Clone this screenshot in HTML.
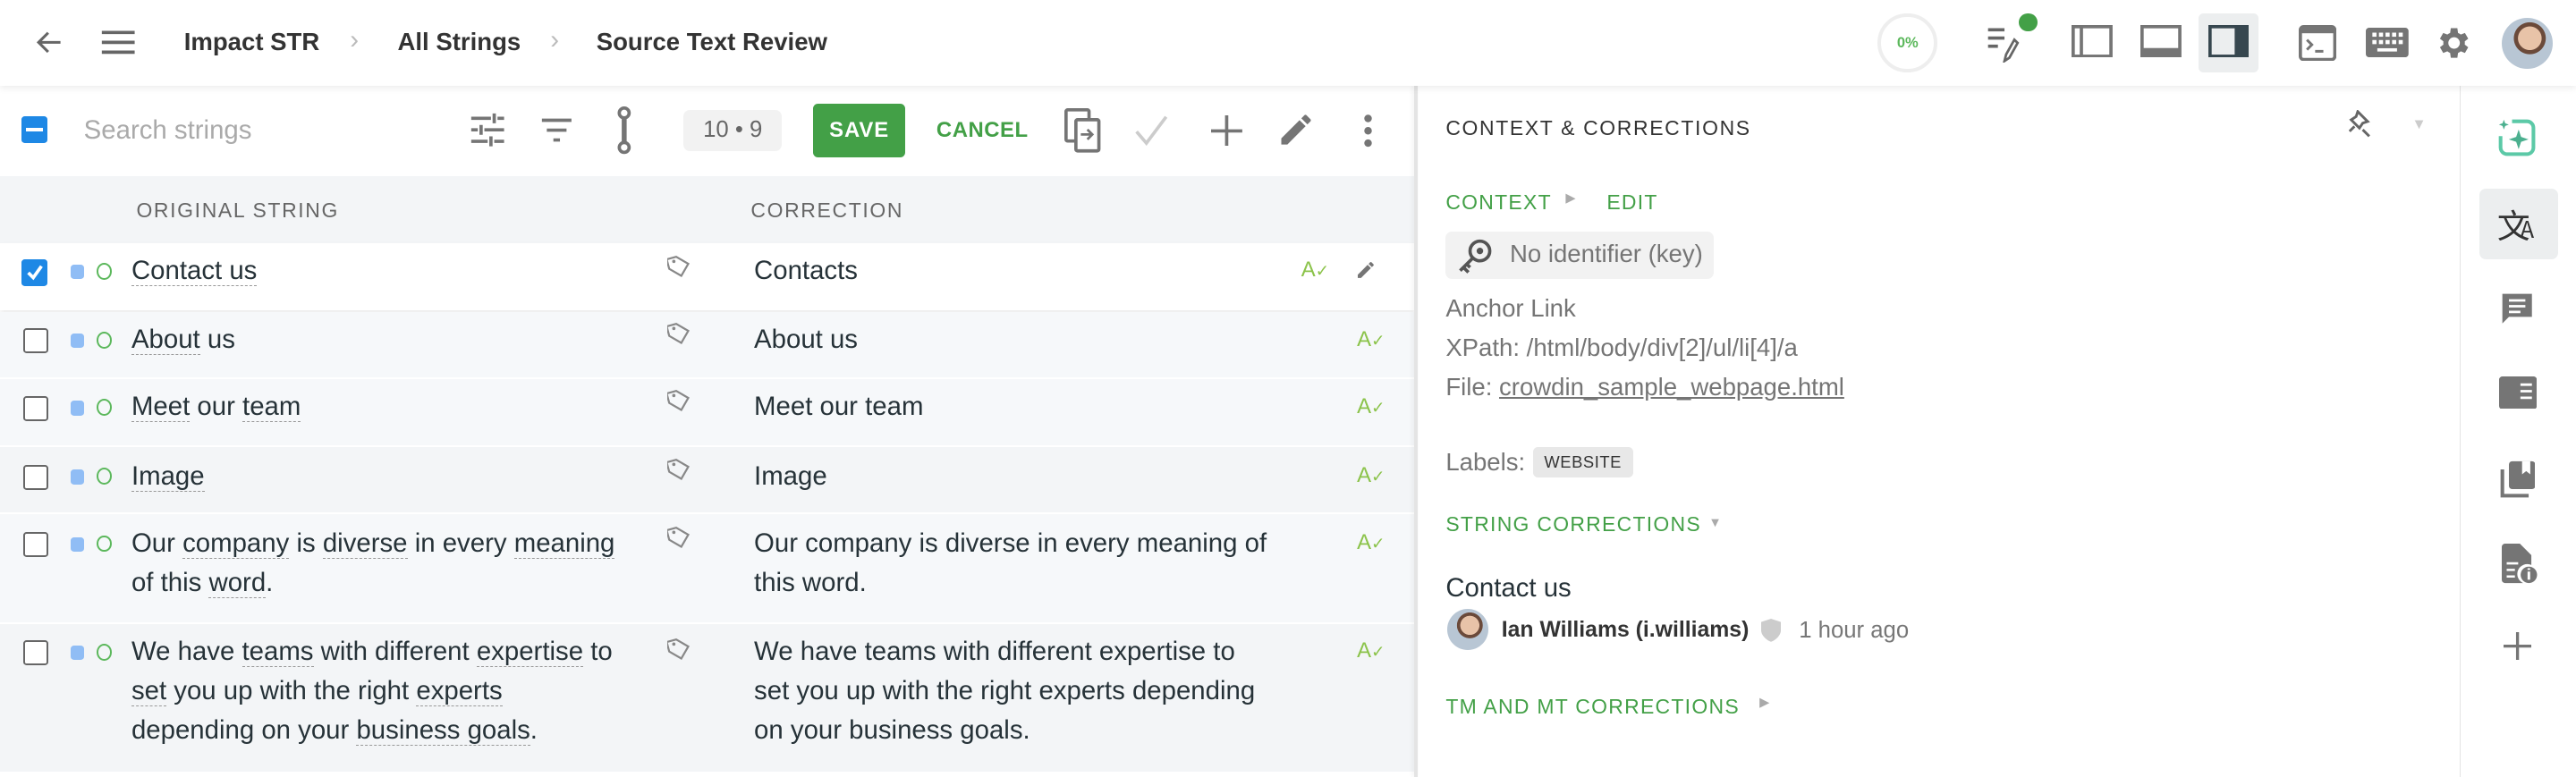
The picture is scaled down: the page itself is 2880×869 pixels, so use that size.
<!DOCTYPE html>
<html><head><meta charset="utf-8">
<style>
html,body{margin:0;padding:0;}
body{width:1568px;height:472.6px;overflow:hidden;zoom:1.83673;background:#fff;font-family:"Liberation Sans",sans-serif;color:#263238;position:relative;}
.a{position:absolute;}
svg{position:absolute;}
.top{left:0;top:0;width:1568px;height:52px;background:#fff;box-shadow:0 2px 4px rgba(0,0,0,.07);z-index:3;}
.bc{font-size:15px;font-weight:bold;color:#333;top:17px;}
.chev{color:#bbb;font-size:16px;top:15px;}
.row{left:0;width:861px;}
.t{font-size:16px;color:#263238;line-height:24px;}
.u{border-bottom:1px dashed #999;}
.cb{left:14px;width:13px;height:13px;border:1.5px solid #666;border-radius:2px;background:#fff;}
.sq{left:43px;width:8px;height:9px;background:#90bdf5;border-radius:2px;}
.ci{left:59px;width:7px;height:8px;border:1.3px solid #5cb85c;border-radius:50%;}
.hdr{font-size:12.5px;letter-spacing:.9px;color:#666;}
.gt{font-size:12.5px;letter-spacing:.7px;color:#43a047;}
.rt{font-size:15px;color:#757575;}
</style></head><body>

<div class="a top">
  <svg style="left:20px;top:16px" width="20" height="20" viewBox="0 0 24 24"><path d="M20 12H5M11 5l-7 7 7 7" stroke="#666" stroke-width="2" fill="none"/></svg>
  <svg style="left:61px;top:16px" width="22" height="20" viewBox="0 0 22 20"><path d="M1 4h20M1 10h20M1 16h20" stroke="#666" stroke-width="2"/></svg>
  <div class="a bc" style="left:112px">Impact STR</div>
  <div class="a chev" style="left:213px">›</div>
  <div class="a bc" style="left:242px">All Strings</div>
  <div class="a chev" style="left:335px">›</div>
  <div class="a bc" style="left:363px">Source Text Review</div>

  <div class="a" style="left:1143px;top:8px;width:32px;height:32px;border:2.5px solid #eee;border-radius:50%;font-size:9px;font-weight:bold;color:#5cb85c;text-align:center;line-height:32px;">0%</div>
  <svg style="left:1208px;top:14px" width="26" height="24" viewBox="0 0 26 24"><path d="M2 4h10M2 9h10M2 14h6" stroke="#666" stroke-width="2"/><path d="M18 10l-5 9-1 4 3-2 5-9z" stroke="#666" stroke-width="1.5" fill="none"/></svg>
  <div class="a" style="left:1229px;top:8px;width:11px;height:11px;border-radius:50%;background:#43a047"></div>
  <svg style="left:1261px;top:15px" width="25" height="20" viewBox="0 0 25 20"><rect x="1" y="1" width="23" height="18" stroke="#757575" stroke-width="2" fill="none"/><path d="M6 1v18" stroke="#757575" stroke-width="2"/></svg>
  <svg style="left:1303px;top:15px" width="25" height="20" viewBox="0 0 25 20"><rect x="1" y="1" width="23" height="18" stroke="#757575" stroke-width="2" fill="none"/><rect x="1" y="14" width="23" height="5" fill="#757575"/></svg>
  <div class="a" style="left:1338px;top:8px;width:37px;height:36px;background:#eceeef;border-radius:3px"></div>
  <svg style="left:1344px;top:15px" width="25" height="20" viewBox="0 0 25 20"><rect x="1" y="1" width="23" height="18" stroke="#37474f" stroke-width="2" fill="none"/><rect x="16" y="1" width="8" height="18" fill="#37474f"/></svg>
  <svg style="left:1399px;top:15px" width="23" height="22" viewBox="0 0 23 22"><rect x="1" y="1" width="21" height="20" rx="2" stroke="#757575" stroke-width="2" fill="none"/><rect x="1" y="1" width="21" height="4" fill="#757575"/><path d="M5 9l3 3-3 3M10 16h5" stroke="#757575" stroke-width="1.6" fill="none"/></svg>
  <svg style="left:1440px;top:17px" width="26" height="18" viewBox="0 0 26 18"><rect x="0" y="0" width="26" height="18" rx="2" fill="#757575"/><g fill="#fff"><rect x="4" y="3" width="2.5" height="2.5"/><rect x="8" y="3" width="2.5" height="2.5"/><rect x="12" y="3" width="2.5" height="2.5"/><rect x="16" y="3" width="2.5" height="2.5"/><rect x="20" y="3" width="2.5" height="2.5"/><rect x="4" y="7.5" width="2.5" height="2.5"/><rect x="8" y="7.5" width="2.5" height="2.5"/><rect x="12" y="7.5" width="2.5" height="2.5"/><rect x="16" y="7.5" width="2.5" height="2.5"/><rect x="20" y="7.5" width="2.5" height="2.5"/><rect x="7" y="12.5" width="12" height="2"/></g></svg>
  <svg style="left:1481px;top:14px" width="24" height="24" viewBox="0 0 24 24"><path fill="#757575" d="M19.4 13a7.5 7.5 0 000-2l2.1-1.6-2-3.5-2.5 1a7 7 0 00-1.7-1L14.9 3h-4l-.4 2.9a7 7 0 00-1.7 1l-2.5-1-2 3.5L6.4 11a7.5 7.5 0 000 2l-2.1 1.6 2 3.5 2.5-1a7 7 0 001.7 1l.4 2.9h4l.4-2.9a7 7 0 001.7-1l2.5 1 2-3.5zM12.9 15.5a3.5 3.5 0 110-7 3.5 3.5 0 010 7z"/></svg>
  <div class="a" style="left:1523px;top:11px;width:31px;height:31px;border-radius:50%;background:radial-gradient(circle at 55% 40%,#e8c3a8 0 28%,#6b4a3a 29% 38%,#b8c6d4 39% 100%);overflow:hidden"></div>
</div>

<div class="a" style="left:13px;top:71px;width:16px;height:16px;background:#1e88e5;border-radius:2px"><div class="a" style="left:3px;top:7px;width:10px;height:2px;background:#fff"></div></div>
<div class="a" style="left:51px;top:70px;font-size:16px;color:#aaa">Search strings</div>
<svg style="left:286px;top:68px" width="22" height="22" viewBox="0 0 22 22"><path d="M1 4h12M17 4h4M1 11h4M9 11h12M1 18h10M15 18h6M15 1v6M7 8v6M13 15v6" stroke="#757575" stroke-width="2"/></svg>
<svg style="left:329px;top:70px" width="20" height="18" viewBox="0 0 20 18"><path d="M1 3h18M4 9h12M8 15h4" stroke="#757575" stroke-width="2"/></svg>
<svg style="left:373px;top:65px" width="14" height="29" viewBox="0 0 14 29"><circle cx="7" cy="4" r="3" stroke="#757575" stroke-width="2" fill="none"/><circle cx="7" cy="25" r="3" stroke="#757575" stroke-width="2" fill="none"/><path d="M7 7v15" stroke="#757575" stroke-width="3"/></svg>
<div class="a" style="left:416px;top:67px;width:60px;height:25px;background:#f2f2f2;border-radius:4px;font-size:14px;color:#666;text-align:center;line-height:25px">10 • 9</div>
<div class="a" style="left:495px;top:63px;width:56px;height:33px;background:#43a047;border-radius:3px;color:#fff;font-size:13px;font-weight:bold;text-align:center;line-height:33px;letter-spacing:.5px">SAVE</div>
<div class="a" style="left:570px;top:72px;font-size:13px;font-weight:bold;color:#43a047;letter-spacing:.3px">CANCEL</div>
<svg style="left:648px;top:66px" width="22" height="27" viewBox="0 0 22 27"><rect x="1" y="1" width="14" height="19" rx="1" stroke="#757575" stroke-width="2" fill="none"/><rect x="7" y="7" width="14" height="19" rx="1" stroke="#757575" stroke-width="2" fill="#fff"/><path d="M10 16h6M14 13l3 3-3 3" stroke="#757575" stroke-width="1.5" fill="none"/></svg>
<svg style="left:690px;top:69px" width="22" height="20" viewBox="0 0 22 20"><path d="M2 11l6 7L20 2" stroke="#ccc" stroke-width="2" fill="none"/></svg>
<svg style="left:737px;top:70px" width="19" height="19" viewBox="0 0 19 19"><path d="M9.5 0v19M0 9.5h19" stroke="#757575" stroke-width="2"/></svg>
<svg style="left:777px;top:67px" width="24" height="24" viewBox="0 0 24 24"><path fill="#757575" d="M3 17.3V21h3.7L17.8 9.9l-3.7-3.7zM20.7 7c.4-.4.4-1 0-1.4l-2.3-2.3a1 1 0 00-1.4 0l-1.8 1.8 3.7 3.7z"/></svg>
<svg style="left:830px;top:69px" width="6" height="21" viewBox="0 0 6 21"><circle cx="3" cy="3" r="2.3" fill="#757575"/><circle cx="3" cy="10.5" r="2.3" fill="#757575"/><circle cx="3" cy="18" r="2.3" fill="#757575"/></svg>

<div class="a" style="left:0;top:107px;width:861px;height:41px;background:#f3f5f7"></div>
<div class="a hdr" style="left:83px;top:121px">ORIGINAL STRING</div>
<div class="a hdr" style="left:457px;top:121px">CORRECTION</div>

<div class="a row" style="top:148px;height:41px;background:#fff;box-shadow:0 2px 3px rgba(0,0,0,.08)"></div>
<div class="a row" style="top:190px;height:40px;background:#f6f8fa"></div>
<div class="a row" style="top:231px;height:40px;background:#f6f8fa"></div>
<div class="a row" style="top:272px;height:40px;background:#f3f5f7"></div>
<div class="a row" style="top:313px;height:66px;background:#f6f8fa"></div>
<div class="a row" style="top:380px;height:90px;background:#f3f5f7"></div>

<div class="a" style="left:13px;top:158px;width:16px;height:16px;background:#1e88e5;border-radius:2px"><svg style="left:2px;top:2px" width="12" height="12" viewBox="0 0 12 12"><path d="M2 6l3 3 5-7" stroke="#fff" stroke-width="2" fill="none"/></svg></div>
<div class="a sq" style="top:161px"></div><div class="a ci" style="top:160px"></div>
<div class="a t" style="left:80px;top:153px"><span class="u">Contact us</span></div>
<div class="a t" style="left:459px;top:153px">Contacts</div>

<div class="a cb" style="top:200px"></div><div class="a sq" style="top:203px"></div><div class="a ci" style="top:202px"></div>
<div class="a t" style="left:80px;top:195px"><span class="u">About</span> us</div>
<div class="a t" style="left:459px;top:195px">About us</div>

<div class="a cb" style="top:241px"></div><div class="a sq" style="top:244px"></div><div class="a ci" style="top:243px"></div>
<div class="a t" style="left:80px;top:236px"><span class="u">Meet</span> our <span class="u">team</span></div>
<div class="a t" style="left:459px;top:236px">Meet our team</div>

<div class="a cb" style="top:283px"></div><div class="a sq" style="top:286px"></div><div class="a ci" style="top:285px"></div>
<div class="a t" style="left:80px;top:278px"><span class="u">Image</span></div>
<div class="a t" style="left:459px;top:278px">Image</div>

<div class="a cb" style="top:324px"></div><div class="a sq" style="top:327px"></div><div class="a ci" style="top:326px"></div>
<div class="a t" style="left:80px;top:319px;width:320px">Our <span class="u">company</span> is <span class="u">diverse</span> in every <span class="u">meaning</span><br>of this <span class="u">word</span>.</div>
<div class="a t" style="left:459px;top:319px;width:340px">Our company is diverse in every meaning of<br>this word.</div>

<div class="a cb" style="top:390px"></div><div class="a sq" style="top:393px"></div><div class="a ci" style="top:392px"></div>
<div class="a t" style="left:80px;top:385px;width:320px">We have <span class="u">teams</span> with different <span class="u">expertise</span> to<br><span class="u">set</span> you up with the right <span class="u">experts</span><br>depending on your <span class="u">business goals</span>.</div>
<div class="a t" style="left:459px;top:385px;width:340px">We have teams with different expertise to<br>set you up with the right experts depending<br>on your business goals.</div>

<svg style="left:406px;top:155px" width="14" height="14" viewBox="0 0 14 14"><path d="M1 1h6l6 6-6 6-6-6z" stroke="#888" stroke-width="1.2" fill="none" transform="rotate(-15 7 7)"/><circle cx="4" cy="4" r="1" fill="#888"/></svg>
<svg style="left:406px;top:196px" width="14" height="14" viewBox="0 0 14 14"><path d="M1 1h6l6 6-6 6-6-6z" stroke="#888" stroke-width="1.2" fill="none" transform="rotate(-15 7 7)"/><circle cx="4" cy="4" r="1" fill="#888"/></svg>
<svg style="left:406px;top:237px" width="14" height="14" viewBox="0 0 14 14"><path d="M1 1h6l6 6-6 6-6-6z" stroke="#888" stroke-width="1.2" fill="none" transform="rotate(-15 7 7)"/><circle cx="4" cy="4" r="1" fill="#888"/></svg>
<svg style="left:406px;top:279px" width="14" height="14" viewBox="0 0 14 14"><path d="M1 1h6l6 6-6 6-6-6z" stroke="#888" stroke-width="1.2" fill="none" transform="rotate(-15 7 7)"/><circle cx="4" cy="4" r="1" fill="#888"/></svg>
<svg style="left:406px;top:320px" width="14" height="14" viewBox="0 0 14 14"><path d="M1 1h6l6 6-6 6-6-6z" stroke="#888" stroke-width="1.2" fill="none" transform="rotate(-15 7 7)"/><circle cx="4" cy="4" r="1" fill="#888"/></svg>
<svg style="left:406px;top:388px" width="14" height="14" viewBox="0 0 14 14"><path d="M1 1h6l6 6-6 6-6-6z" stroke="#888" stroke-width="1.2" fill="none" transform="rotate(-15 7 7)"/><circle cx="4" cy="4" r="1" fill="#888"/></svg>

<div class="a" style="left:792px;top:157px;font-size:13px;color:#8bc34a">A<span style="font-size:10px">✓</span></div>
<svg style="left:825px;top:158px" width="13" height="13" viewBox="0 0 24 24"><path fill="#757575" d="M3 17.3V21h3.7L17.8 9.9l-3.7-3.7zM20.7 7c.4-.4.4-1 0-1.4l-2.3-2.3a1 1 0 00-1.4 0l-1.8 1.8 3.7 3.7z"/></svg>
<div class="a" style="left:826px;top:199px;font-size:13px;color:#8bc34a">A<span style="font-size:10px">✓</span></div>
<div class="a" style="left:826px;top:240px;font-size:13px;color:#8bc34a">A<span style="font-size:10px">✓</span></div>
<div class="a" style="left:826px;top:282px;font-size:13px;color:#8bc34a">A<span style="font-size:10px">✓</span></div>
<div class="a" style="left:826px;top:323px;font-size:13px;color:#8bc34a">A<span style="font-size:10px">✓</span></div>
<div class="a" style="left:826px;top:389px;font-size:13px;color:#8bc34a">A<span style="font-size:10px">✓</span></div>

<div class="a" style="left:861px;top:52px;width:2px;height:421px;background:#e4e4e4;box-shadow:-1px 0 3px rgba(0,0,0,.06)"></div>

<div class="a" style="left:880px;top:71px;font-size:12.5px;letter-spacing:.9px;color:#333">CONTEXT &amp; CORRECTIONS</div>
<svg style="left:1429px;top:67px" width="17" height="17" viewBox="0 0 17 17"><path d="M6 1l6 6-3 1-2 3-5-5 3-2z M4 10l-3 3M9 12l4 4" stroke="#666" stroke-width="1.6" fill="none"/></svg>
<div class="a" style="left:1468px;top:70px;font-size:9px;color:#ccc">▼</div>

<div class="a gt" style="left:880px;top:116px">CONTEXT</div>
<div class="a" style="left:953px;top:116px;font-size:8px;color:#aaa">▶</div>
<div class="a gt" style="left:978px;top:116px">EDIT</div>
<div class="a" style="left:880px;top:141px;width:163px;height:29px;background:#f2f2f2;border-radius:4px"></div>
<svg style="left:886px;top:145px" width="24" height="22" viewBox="0 0 24 22"><circle cx="15" cy="8" r="6" stroke="#555" stroke-width="2" fill="none"/><circle cx="15" cy="8" r="2" fill="#555"/><path d="M11 12l-8 8M5 18l3 3M7 16l2 2" stroke="#555" stroke-width="2" fill="none"/></svg>
<div class="a rt" style="left:919px;top:146px">No identifier (key)</div>
<div class="a rt" style="left:880px;top:179px">Anchor Link</div>
<div class="a rt" style="left:880px;top:203px">XPath: /html/body/div[2]/ul/li[4]/a</div>
<div class="a rt" style="left:880px;top:227px">File: <span style="text-decoration:underline">crowdin_sample_webpage.html</span></div>

<div class="a rt" style="left:880px;top:273px">Labels:</div>
<div class="a" style="left:933px;top:272px;width:61px;height:19px;background:#e8e8e8;border-radius:3px;font-size:10px;color:#333;text-align:center;line-height:19px;letter-spacing:.3px">WEBSITE</div>

<div class="a gt" style="left:880px;top:312px">STRING CORRECTIONS</div>
<div class="a" style="left:1040px;top:314px;font-size:8px;color:#aaa">▼</div>

<div class="a" style="left:880px;top:349px;font-size:16px;color:#263238">Contact us</div>
<div class="a" style="left:881px;top:371px;width:25px;height:25px;border-radius:50%;background:radial-gradient(circle at 55% 40%,#e8c3a8 0 28%,#6b4a3a 29% 38%,#b8c6d4 39% 100%)"></div>
<div class="a" style="left:914px;top:376px;font-size:13.5px;font-weight:bold;color:#333">Ian Williams (i.williams)</div>
<svg style="left:1072px;top:377px" width="12" height="14" viewBox="0 0 12 14"><path d="M6 0l6 2v5c0 3-3 6-6 7-3-1-6-4-6-7V2z" fill="#ccc"/></svg>
<div class="a" style="left:1095px;top:376px;font-size:14px;color:#777">1 hour ago</div>

<div class="a gt" style="left:880px;top:423px">TM AND MT CORRECTIONS</div>
<div class="a" style="left:1071px;top:423px;font-size:8px;color:#aaa">▶</div>

<div class="a" style="left:1497px;top:52px;width:1px;height:421px;background:#e4e4e4"></div>
<svg style="left:1520px;top:72px" width="24" height="24" viewBox="0 0 24 24"><path d="M9 2h9a4 4 0 014 4v12a4 4 0 01-4 4H6a4 4 0 01-4-4v-7" stroke="#5cc9a7" stroke-width="2.2" fill="none"/><path d="M13 7l1.5 4.5L19 13l-4.5 1.5L13 19l-1.5-4.5L7 13l4.5-1.5z" fill="#4bb08f"/><path d="M4 1l.8 2.2L7 4l-2.2.8L4 7l-.8-2.2L1 4l2.2-.8z" fill="#4bb08f"/></svg>
<div class="a" style="left:1509px;top:115px;width:48px;height:43px;background:#eceeef;border-radius:4px"></div>
<div class="a" style="left:1520px;top:124px;font-size:20px;color:#333;font-family:'Noto Sans CJK SC',sans-serif;line-height:24px">文<span style="font-size:14px;margin-left:-6px">A</span></div>
<svg style="left:1521px;top:177px" width="22" height="22" viewBox="0 0 22 22"><path d="M2 2h18v14H6l-4 4z" fill="#757575"/><path d="M6 6h10M6 9.5h10M6 13h7" stroke="#fff" stroke-width="1.5"/></svg>
<svg style="left:1521px;top:229px" width="23" height="20" viewBox="0 0 23 20"><rect x="0" y="0" width="23" height="20" rx="2" fill="#757575"/><path d="M13 5h7M13 9h7M13 13h7" stroke="#fff" stroke-width="1.5"/></svg>
<svg style="left:1521px;top:280px" width="22" height="24" viewBox="0 0 22 24"><path d="M2 6v16h16" stroke="#757575" stroke-width="2.2" fill="none"/><rect x="6" y="1" width="16" height="17" rx="2" fill="#757575"/><path d="M14 1v8l2.5-2 2.5 2V1" fill="#fff"/></svg>
<svg style="left:1523px;top:331px" width="22" height="25" viewBox="0 0 22 25"><path d="M0 2a2 2 0 012-2h9l7 7v6a6 6 0 00-5 11H2a2 2 0 01-2-2z" fill="#757575"/><path d="M3 12h7M3 16h5M3 20h5" stroke="#fff" stroke-width="1.4"/><circle cx="16.5" cy="19" r="5" fill="#757575"/><path d="M16.5 17v5M16.5 15v1" stroke="#fff" stroke-width="1.6"/></svg>
<svg style="left:1524px;top:385px" width="17" height="17" viewBox="0 0 17 17"><path d="M8.5 0v17M0 8.5h17" stroke="#757575" stroke-width="1.8"/></svg>
</body></html>
